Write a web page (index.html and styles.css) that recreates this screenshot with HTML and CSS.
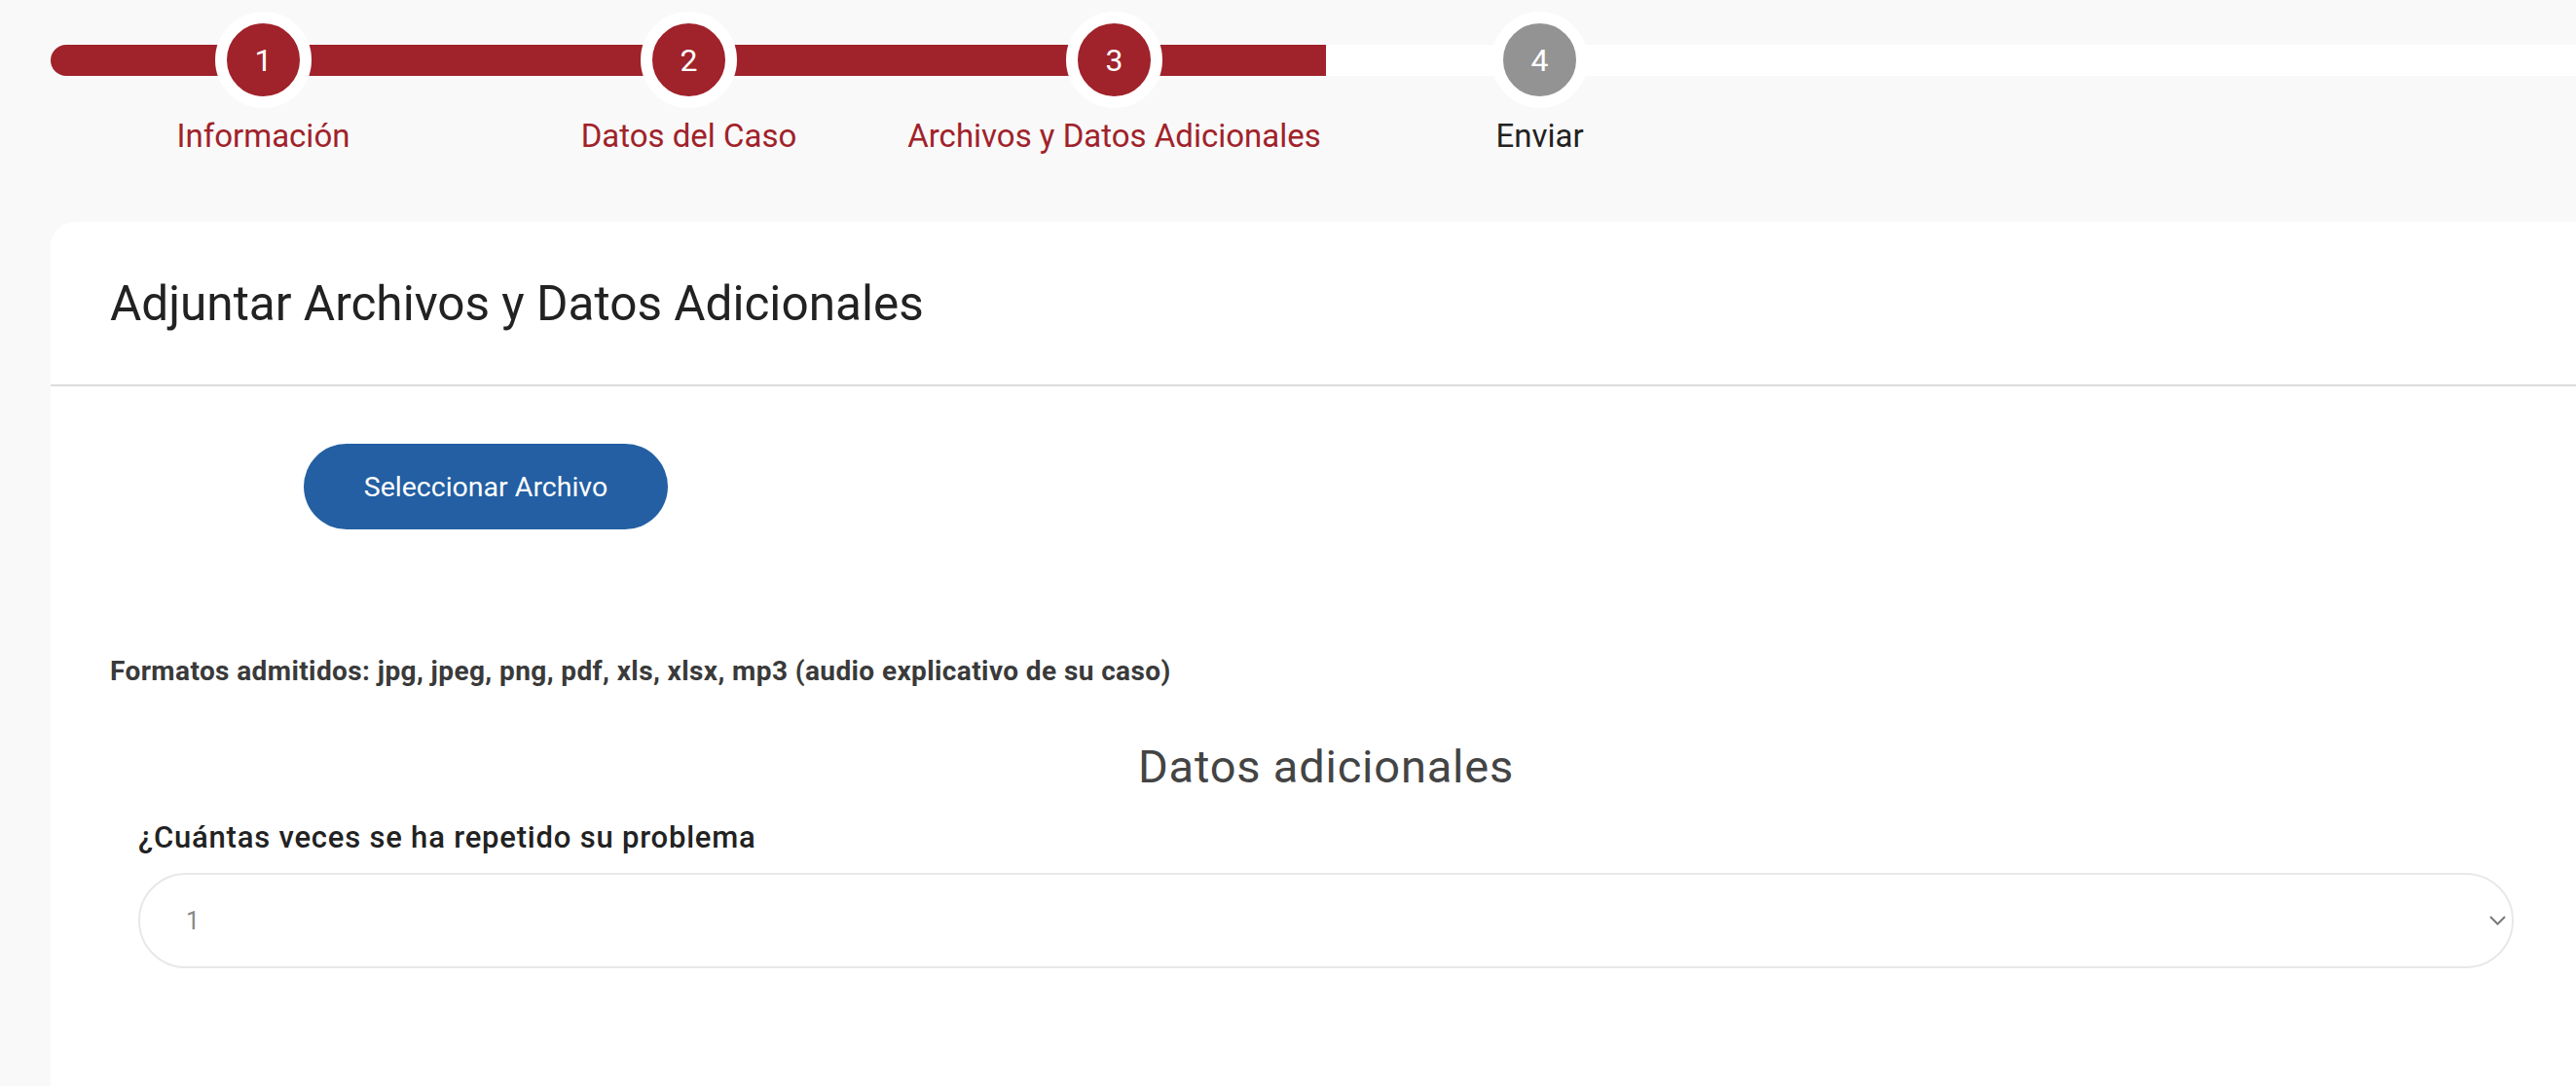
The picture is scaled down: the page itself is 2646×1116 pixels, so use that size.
FILE: index.html
```html
<!DOCTYPE html>
<html lang="es">
<head>
    <meta charset="UTF-8">
    <meta name="viewport" content="width=device-width, initial-scale=1.0">
    <title>Adjuntar Archivos y Datos Adicionales</title>
    <link rel="stylesheet" href="styles.css">
</head>
<body>
    <!-- Pasos del formulario -->
    <div class="stepper">
        <div class="track"><div class="track-fill"></div></div>
        <div class="step-circle done">1</div>
        <div class="step-circle done">2</div>
        <div class="step-circle done">3</div>
        <div class="step-circle">4</div>
        <div class="step-label done">Información</div>
        <div class="step-label done">Datos del Caso</div>
        <div class="step-label done">Archivos y Datos Adicionales</div>
        <div class="step-label">Enviar</div>
    </div>

    <div class="card">
        <div class="card-header">
            <h1>Adjuntar Archivos y Datos Adicionales</h1>
        </div>
        <div class="card-body">
            <button class="btn-file">Seleccionar Archivo</button>
            <p class="formats">Formatos admitidos: jpg, jpeg, png, pdf, xls, xlsx, mp3 (audio explicativo de su caso)</p>

            <div class="extra">
                <h2>Datos adicionales</h2>
                <label class="field-label">¿Cuántas veces se ha repetido su problema</label>
                <div class="select">
                    <span>1</span>
                    <svg width="17" height="10" viewBox="0 0 17 10">
                        <path d="M1 1 L8.5 8.5 L16 1" fill="none" stroke="#7a7a7a" stroke-width="2"/>
                    </svg>
                </div>
            </div>
        </div>
    </div>
</body>
</html>
```

FILE: styles.css
```css
body {
    margin: 0;
    font-family: Roboto, "Liberation Sans", Arial, sans-serif;
    background-color: #f9f9f9;
    color: #222;
    overflow: hidden;
}

/* Stepper */
.stepper {
    display: grid;
    grid-template-columns: repeat(4, 437px) 1fr;
    grid-template-rows: 99px auto;
    margin-left: 52px;
    padding-top: 12px;
}

.track {
    grid-row: 1;
    grid-column: 1 / -1;
    align-self: center;
    height: 32px;
    background-color: #fff;
    border-radius: 16px 0 0 16px;
    overflow: hidden;
}

.track-fill {
    width: 1310px;
    height: 100%;
    background-color: #a0222a;
}

.step-circle {
    grid-row: 1;
    justify-self: center;
    width: 75px;
    height: 75px;
    border: 12px solid #fff;
    border-radius: 50%;
    background-color: #939393;
    color: #fff;
    font-size: 32px;
    display: flex;
    align-items: center;
    justify-content: center;
}

.step-circle:nth-of-type(2) { grid-column: 1; }
.step-circle:nth-of-type(3) { grid-column: 2; }
.step-circle:nth-of-type(4) { grid-column: 3; }
.step-circle:nth-of-type(5) { grid-column: 4; }

.step-circle.done {
    background-color: #a0222a;
}

.step-label {
    grid-row: 2;
    text-align: center;
    font-size: 33px;
    line-height: 38px;
    margin-top: 10px;
    color: #222;
}

.step-label.done {
    color: #a0222a;
}

/* Card */
.card {
    margin: 69px 0 0 52px;
    width: 2620px;
    min-height: 900px;
    background-color: #fff;
    border-top-left-radius: 25px;
}

.card-header {
    height: 167px;
    display: flex;
    align-items: center;
    padding: 0 61px;
    border-bottom: 2px solid #dcdcdc;
}

.card-header h1 {
    margin: 0;
    font-size: 49.5px;
    font-weight: 400;
    color: #222;
}

.card-body {
    padding: 59px 61px 0;
}

.btn-file {
    margin-left: 199px;
    width: 374px;
    height: 88px;
    border: none;
    border-radius: 44px;
    background-color: #235fa2;
    color: #fff;
    font-family: inherit;
    font-size: 28.5px;
    cursor: pointer;
}

.formats {
    margin: 130px 0 0;
    font-size: 28px;
    line-height: 31px;
    letter-spacing: 0.4px;
    font-weight: 700;
    color: #3a3a3a;
}

.extra {
    padding: 0 29px;
}

.extra h2 {
    margin: 56px 0 0;
    text-align: center;
    font-size: 47px;
    line-height: 54px;
    letter-spacing: 0.8px;
    font-weight: 400;
    color: #444;
}

.field-label {
    display: block;
    margin-top: 28px;
    font-size: 31px;
    line-height: 35px;
    letter-spacing: 0.8px;
    font-weight: 500;
    color: #222;
}

.select {
    margin-top: 19px;
    height: 94px;
    border: 2px solid #e8e8e8;
    border-radius: 49px;
    display: flex;
    align-items: center;
    justify-content: space-between;
    padding: 0 6px 0 47px;
    font-size: 25px;
    color: #888;
}
```
